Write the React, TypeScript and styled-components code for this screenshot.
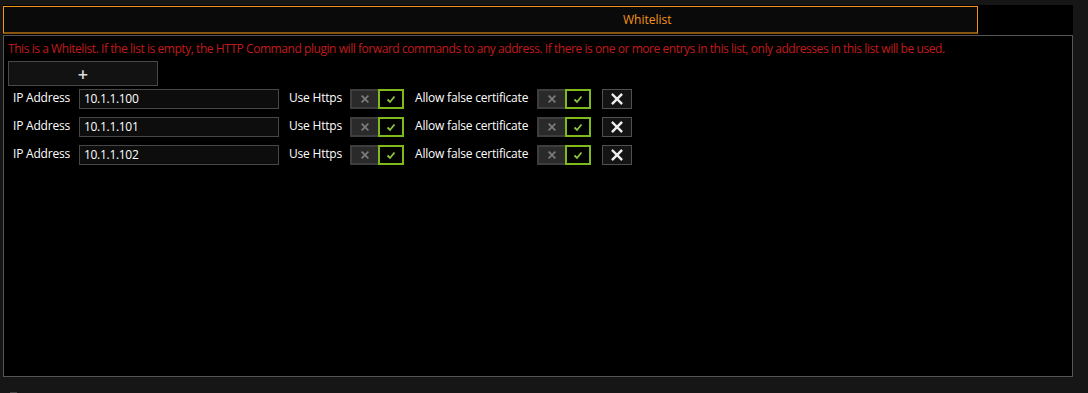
import React, { FC } from "react";
import styled, { createGlobalStyle } from "styled-components";

const GlobalStyle = createGlobalStyle`
  html, body {
    margin: 0;
    padding: 0;
    background: #161616;
    font-family: "Open Sans", "Noto Sans", "Liberation Sans", sans-serif;
    font-size: 12px;
    color: #fff;
    overflow: hidden;
  }
`;

const addresses = ["10.1.1.100", "10.1.1.101", "10.1.1.102"];

const CrossIcon: FC<{ size: number; color: string; stroke: number }> = ({
  size,
  color,
  stroke,
}) => (
  <svg width={size} height={size} viewBox="0 0 10 10">
    <path
      d="M1.5 1.5 L8.5 8.5 M8.5 1.5 L1.5 8.5"
      stroke={color}
      strokeWidth={stroke}
      strokeLinecap="square"
    />
  </svg>
);

const CheckIcon: FC = () => (
  <svg width={10} height={10} viewBox="0 0 10 10">
    <path
      d="M1.5 5.5 L4 8 L8.5 2.5"
      stroke="#8cc63f"
      strokeWidth={1.8}
      fill="none"
    />
  </svg>
);

const Toggle: FC = () => (
  <Switch>
    <Off>
      <CrossIcon size={8} color="#7a7a7a" stroke={2.2} />
    </Off>
    <On>
      <CheckIcon />
    </On>
  </Switch>
);

const WhitelistRow: FC<{ address: string }> = ({ address }) => (
  <Row>
    <Label width={66} $indent={5}>
      IP Address
    </Label>
    <Input defaultValue={address} />
    <Label width={61}>Use Https</Label>
    <Toggle />
    <Label width={122} $indent={11}>
      Allow false certificate
    </Label>
    <Toggle />
    <RemoveButton>
      <CrossIcon size={12} color="#eee" stroke={2} />
    </RemoveButton>
  </Row>
);

const App: FC = () => {
  return (
    <>
      <GlobalStyle />
      <Page>
        <TabBar>
          <Tab>
            <TabTitle>Whitelist</TabTitle>
          </Tab>
          <TabFiller />
        </TabBar>
        <Panel>
          <Notice>
            This is a Whitelist. If the list is empty, the HTTP Command plugin
            will forward commands to any address. If there is one or more
            entrys in this list, only addresses in this list will be used.
          </Notice>
          <AddButton>+</AddButton>
          <Rows>
            {addresses.map((a) => (
              <WhitelistRow key={a} address={a} />
            ))}
          </Rows>
        </Panel>
        <Stub />
      </Page>
    </>
  );
};

export default App;

const Page = styled.div`
  width: 1070px;
  height: 393px;
  padding: 5px 0 0 3px;
  box-sizing: content-box;
  display: flex;
  flex-direction: column;
`;

const TabBar = styled.div`
  display: flex;
  height: 30px;
  background: #000;
`;

const Tab = styled.div`
  width: 975px;
  height: 28px;
  margin-top: 1px;
  box-sizing: border-box;
  background: #0a0a0a;
  border: 1px solid #f39419;
  border-bottom: 2px solid #8a5510;
  display: flex;
  align-items: center;
  padding-left: 619px;
`;

const TabTitle = styled.span`
  color: #f39419;
  font-size: 12px;
`;

const TabFiller = styled.div`
  flex: 1;
  background: #000;
`;

const Panel = styled.div`
  height: 342px;
  box-sizing: border-box;
  border: 1px solid #555;
  background: #000;
  padding: 5px 0 0 4px;
  display: flex;
  flex-direction: column;
  align-items: flex-start;
`;

const Notice = styled.div`
  color: #c01a1a;
  font-size: 12px;
  line-height: 16px;
  white-space: nowrap;
  letter-spacing: -0.44px;
`;

const AddButton = styled.div`
  margin-top: 4px;
  width: 150px;
  height: 25px;
  box-sizing: border-box;
  background: #121212;
  border: 1px solid #484848;
  color: #ddd;
  font-size: 18px;
  font-weight: 600;
  display: flex;
  align-items: center;
  justify-content: center;
  line-height: 1;
`;

const Rows = styled.div`
  margin-top: 3px;
  display: flex;
  flex-direction: column;
  gap: 8px;
`;

const Row = styled.div`
  display: flex;
  align-items: center;
  height: 20px;
`;

const Label = styled.span<{ width: number; $indent?: number }>`
  width: ${(p) => p.width}px;
  padding-left: ${(p) => p.$indent ?? 9}px;
  color: #fff;
  font-size: 12px;
  white-space: nowrap;
  letter-spacing: -0.2px;
  margin-top: -3px;
`;

const Input = styled.input`
  width: 200px;
  height: 20px;
  box-sizing: border-box;
  background: #0d0d0d;
  border: 1px solid #474747;
  color: #fff;
  font-family: inherit;
  font-size: 12px;
  padding: 0 4px 1px;
  letter-spacing: -0.3px;
  outline: none;
  margin-right: 1px;
`;

const Switch = styled.div`
  display: flex;
  width: 54px;
  height: 20px;
`;

const Off = styled.div`
  width: 28px;
  height: 20px;
  box-sizing: border-box;
  background: #2a2a2a;
  border: 2px solid #3e3e3e;
  border-right: none;
  display: flex;
  align-items: center;
  justify-content: center;
`;

const On = styled.div`
  width: 26px;
  height: 20px;
  box-sizing: border-box;
  background: #000;
  border: 2px solid #7fba1c;
  display: flex;
  align-items: center;
  justify-content: center;
`;

const RemoveButton = styled.div`
  margin-left: 11px;
  width: 30px;
  height: 20px;
  box-sizing: border-box;
  background: #141414;
  border: 1px solid #505050;
  display: flex;
  align-items: center;
  justify-content: center;
`;

const Stub = styled.div`
  margin: 15px 0 0 7px;
  width: 7px;
  height: 2px;
  background: #444;
`;
